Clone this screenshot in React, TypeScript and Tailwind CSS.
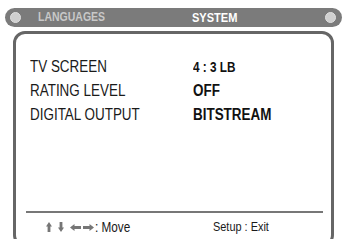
import React from "react";

const font = { fontFamily: '"Liberation Sans", Arial, sans-serif' };

// squeezed text, the screen font is a condensed grotesque
function N({ children, className = "" }: { children: React.ReactNode; className?: string }) {
  return <span className={`inline-block origin-left scale-x-[0.84] whitespace-nowrap ${className}`}>{children}</span>;
}

function ArrowV({ down = false, className = "" }: { down?: boolean; className?: string }) {
  return (
    <svg width="6" height="10" viewBox="0 0 6 10" className={`${down ? "rotate-180" : ""} ${className}`}>
      <path d="M3 0 L6 4.5 L4.4 4.5 L4.4 10 L1.6 10 L1.6 4.5 L0 4.5 Z" fill="#767676" />
    </svg>
  );
}

function ArrowH({ left = false, className = "" }: { left?: boolean; className?: string }) {
  return (
    <svg width="11" height="7" viewBox="0 0 11 7" className={`${left ? "rotate-180" : ""} ${className}`}>
      <path d="M11 3.5 L6.5 0 L6.5 2 L0 2 L0 5 L6.5 5 L6.5 7 Z" fill="#767676" />
    </svg>
  );
}

const rows = [
  { label: "TV SCREEN", value: "4 : 3 LB", small: true },
  { label: "RATING LEVEL", value: "OFF" },
  { label: "DIGITAL OUTPUT", value: "BITSTREAM" },
];

export default function App() {
  return (
    <div className="w-[343px] h-[239px] overflow-hidden bg-white pt-[8px]" style={font}>
      {/* tab bar */}
      <div className="ml-[5px] mr-[1px] h-[19px] rounded-full bg-[#7b7b7b] flex items-center">
        <div className="ml-[5px] w-[11px] h-[11px] rounded-full bg-[#cfcfcf] border border-[#e0e0e0]" />
        <div className="ml-[17px] w-[154px] text-[12.5px] font-bold text-[#c8c8c8] leading-none">
          <N className="scale-x-[0.8]">LANGUAGES</N>
        </div>
        <div className="text-[13px] font-bold text-white leading-none">
          <N className="scale-x-[0.85]">SYSTEM</N>
        </div>
        <div className="ml-auto mr-[6px] w-[11px] h-[11px] rounded-full bg-[#cfcfcf] border border-[#e0e0e0]" />
      </div>

      {/* panel */}
      <div className="mt-[4px] ml-[13px] w-[321px] h-[216px] border-[3px] border-[#666] rounded-[12px] bg-white">
        <div className="h-[177px] pt-[21px] pl-[14px]">
          {rows.map((r) => (
            <div key={r.label} className="flex items-center h-[24px] leading-[24px]">
              <div className="w-[163px] text-[16px] text-[#1a1a1a]">
                <N className="scale-x-[0.79]">{r.label}</N>
              </div>
              <div className={`font-bold text-[#111] ${r.small ? "text-[14px]" : "text-[16px]"}`}>
                <N className={r.small ? "scale-x-[0.82]" : "scale-x-[0.75]"}>{r.value}</N>
              </div>
            </div>
          ))}
        </div>
        <div className="ml-[10px] mr-[8px] h-[2px] bg-[#777]" />
        <div className="flex items-center h-[24px] mt-[2px] text-[13px] text-[#1a1a1a]">
          <div className="w-[197px] pl-[30px] flex items-center">
            <ArrowV />
            <ArrowV down className="ml-[6px]" />
            <ArrowH left className="ml-[6px]" />
            <ArrowH className="ml-[2px]" />
            <N className="ml-[1px] text-[14px]">: Move</N>
          </div>
          <N>Setup : Exit</N>
        </div>
      </div>
    </div>
  );
}
